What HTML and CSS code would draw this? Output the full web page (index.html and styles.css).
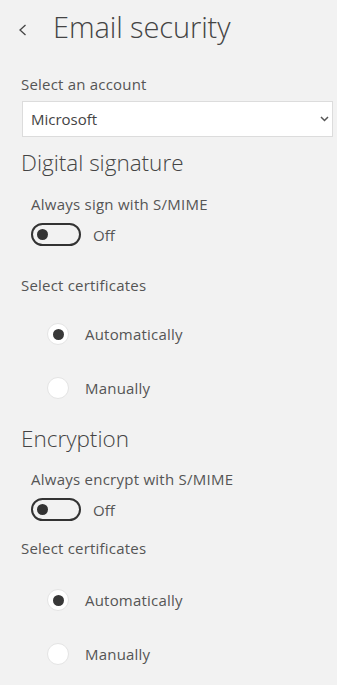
FILE: index.html
```html
<!DOCTYPE html>
<html lang="en">
<head>
<meta charset="utf-8">
<title>Email security</title>
<link rel="stylesheet" href="styles.css">
</head>
<body>
<div class="page">
  <header class="header">
    <svg class="back" width="10" height="14" viewBox="0 0 10 14" aria-hidden="true"><path d="M7.5 2 L2 7 L7.5 12" fill="none" stroke="#444" stroke-width="1.3"/></svg>
    <h1 class="title">Email security</h1>
  </header>

  <div class="label label-account">Select an account</div>
  <div class="select">
    <span class="select-text">Microsoft</span>
    <svg class="select-chev" width="9" height="6" viewBox="0 0 9 6" aria-hidden="true"><path d="M1 1 L4.5 4.5 L8 1" fill="none" stroke="#555" stroke-width="1.5"/></svg>
  </div>

  <h2 class="section section-sign">Digital signature</h2>
  <div class="sublabel sublabel-sign">Always sign with S/MIME</div>
  <div class="toggle-row toggle-sign">
    <span class="toggle"><span class="knob"></span></span>
    <span class="toggle-text">Off</span>
  </div>
  <div class="label label-cert">Select certificates</div>
  <div class="radio-row radio-first">
    <span class="radio checked"><span class="dot"></span></span>
    <span class="radio-text">Automatically</span>
  </div>
  <div class="radio-row radio-second">
    <span class="radio"></span>
    <span class="radio-text">Manually</span>
  </div>

  <h2 class="section section-enc">Encryption</h2>
  <div class="sublabel sublabel-enc">Always encrypt with S/MIME</div>
  <div class="toggle-row toggle-enc">
    <span class="toggle"><span class="knob"></span></span>
    <span class="toggle-text">Off</span>
  </div>
  <div class="label label-cert2">Select certificates</div>
  <div class="radio-row radio-first2">
    <span class="radio checked"><span class="dot"></span></span>
    <span class="radio-text">Automatically</span>
  </div>
  <div class="radio-row radio-second">
    <span class="radio"></span>
    <span class="radio-text">Manually</span>
  </div>
</div>
</body>
</html>
```

FILE: styles.css
```css
html, body {
  margin: 0;
  padding: 0;
  background: #f2f2f2;
}
body {
  font-family: "Open Sans", "Noto Sans", "Liberation Sans", sans-serif;
  color: #555;
  width: 337px;
  height: 685px;
  overflow: hidden;
}
.page {
  display: flex;
  flex-direction: column;
  align-items: flex-start;
}
.header {
  display: flex;
  align-items: center;
  margin-top: 7px;
  height: 40px;
  padding-left: 18px;
}
.back {
  display: block;
  margin-right: 25px;
  margin-top: 5px;
}
.title {
  margin: 0;
  font-size: 29px;
  font-weight: 300;
  line-height: 40px;
  color: #444;
  letter-spacing: -0.1px;
}
.label {
  font-size: 15px;
  line-height: 20px;
  margin-left: 21px;
  letter-spacing: 0.2px;
}
.label-account { margin-top: 27px; }
.select {
  margin-top: 7px;
  margin-left: 22px;
  width: 311px;
  height: 36px;
  box-sizing: border-box;
  background: #fff;
  border: 1px solid #dcdcdc;
  display: flex;
  align-items: center;
  justify-content: space-between;
  padding: 0 3px 0 8px;
}
.select-text {
  font-size: 15px;
  color: #444;
}
.select-chev { display: block; }
.section {
  margin: 0;
  font-size: 22.5px;
  font-weight: 300;
  line-height: 30px;
  margin-left: 21px;
  color: #444;
}
.section-sign { margin-top: 11px; }
.section-enc { margin-top: 25px; }
.sublabel {
  font-size: 15px;
  line-height: 20px;
  margin-left: 31px;
  letter-spacing: 0.25px;
}
.sublabel-sign { margin-top: 16px; }
.sublabel-enc { margin-top: 15px; }
.toggle-row {
  display: flex;
  align-items: center;
  margin-left: 31px;
  height: 23px;
}
.toggle-sign { margin-top: 9px; }
.toggle-enc { margin-top: 9px; }
.toggle {
  width: 50px;
  height: 23px;
  box-sizing: border-box;
  border: 2px solid #333;
  border-radius: 12px;
  display: flex;
  align-items: center;
  padding-left: 4px;
}
.knob {
  width: 11px;
  height: 11px;
  border-radius: 50%;
  background: #333;
}
.toggle-text {
  margin-left: 12px;
  font-size: 15px;
}
.label-cert { margin-top: 29px; }
.label-cert2 { margin-top: 17px; }
.radio-row {
  display: flex;
  align-items: center;
  margin-left: 47px;
  height: 22px;
}
.radio-first { margin-top: 28px; }
.radio-first2 { margin-top: 31px; }
.radio-second { margin-top: 32px; }
.radio {
  width: 22px;
  height: 22px;
  box-sizing: border-box;
  border-radius: 50%;
  background: #fff;
  border: 1px solid #e4e4e4;
  display: flex;
  align-items: center;
  justify-content: center;
}
.dot {
  width: 11px;
  height: 11px;
  border-radius: 50%;
  background: #383838;
}
.radio-text {
  margin-left: 16px;
  font-size: 15px;
  letter-spacing: 0.2px;
}
```
